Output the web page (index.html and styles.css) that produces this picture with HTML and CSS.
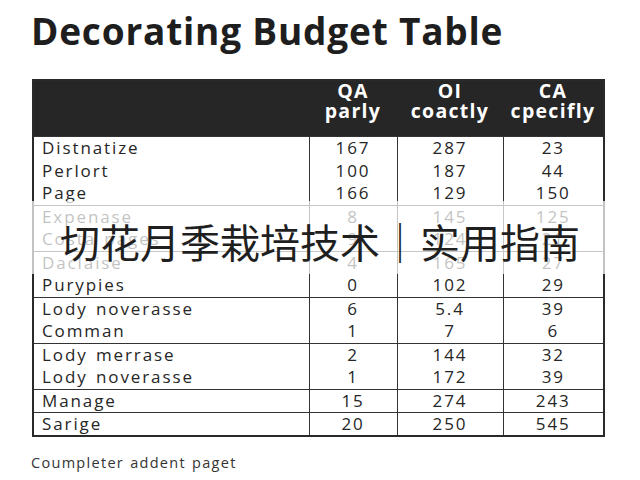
FILE: index.html
```html
<!DOCTYPE html>
<html lang="en">
<head>
<meta charset="utf-8">
<link rel="stylesheet" href="styles.css">
</head>
<body>
<div class="page">
  <h1 class="title">Decorating Budget Table</h1>
  <table class="budget">
    <colgroup>
      <col class="c-name"><col class="c-a"><col class="c-b"><col class="c-c">
    </colgroup>
    <thead>
      <tr>
        <th></th>
        <th>QA<br>parly</th>
        <th>OI<br>coactly</th>
        <th>CA<br>cpecifly</th>
      </tr>
    </thead>
    <tbody>
      <tr><td>Distnatize</td><td>167</td><td>287</td><td>23</td></tr>
      <tr><td>Perlort</td><td>100</td><td>187</td><td>44</td></tr>
      <tr><td>Page</td><td>166</td><td>129</td><td>150</td></tr>
    </tbody>
    <tbody>
      <tr><td>Expenase</td><td>8</td><td>145</td><td>125</td></tr>
      <tr><td>Costa pages</td><td>9</td><td>124</td><td>21</td></tr>
    </tbody>
    <tbody>
      <tr><td>Daclaise</td><td>4</td><td>165</td><td>27</td></tr>
      <tr><td>Purypies</td><td>0</td><td>102</td><td>29</td></tr>
    </tbody>
    <tbody>
      <tr><td>Lody noverasse</td><td>6</td><td>5.4</td><td>39</td></tr>
      <tr><td>Comman</td><td>1</td><td>7</td><td>6</td></tr>
    </tbody>
    <tbody>
      <tr><td>Lody merrase</td><td>2</td><td>144</td><td>32</td></tr>
      <tr><td>Lody noverasse</td><td>1</td><td>172</td><td>39</td></tr>
    </tbody>
    <tbody>
      <tr><td>Manage</td><td>15</td><td>274</td><td>243</td></tr>
    </tbody>
    <tbody>
      <tr><td>Sarige</td><td>20</td><td>250</td><td>545</td></tr>
    </tbody>
  </table>
  <p class="footnote">Coumpleter addent paget</p>
  <div class="banner">切花月季栽培技术｜实用指南</div>
</div>
</body>
</html>
```

FILE: styles.css
```css
* { box-sizing: border-box; }
html, body { margin: 0; padding: 0; background: #fff; }
body {
  width: 640px;
  height: 480px;
  overflow: hidden;
  font-family: "Open Sans", "Noto Sans", sans-serif;
  color: #222;
}
.page {
  position: relative;
  width: 640px;
  height: 480px;
  padding: 8px 0 0 31px;
}
.title {
  margin: 0;
  font-size: 37px;
  font-weight: 700;
  line-height: 46px;
  color: #1e1e1e;
  letter-spacing: 0.8px;
}
.budget {
  margin-top: 25px;
  margin-left: 1px;
  width: 571px;
  border-collapse: collapse;
  border: 2px solid #2a2a2a;
  font-size: 17px;
  letter-spacing: 1.9px;
  word-spacing: 2px;
  table-layout: fixed;
}
.c-name { width: 276px; }
.c-a { width: 88px; }
.c-b { width: 106px; }
.c-c { width: 101px; }
.budget thead th {
  background: #262626;
  color: #fff;
  font-weight: 700;
  font-size: 19.5px;
  letter-spacing: 1.3px;
  line-height: 20px;
  height: 56px;
  padding: 0;
  text-align: center;
  vertical-align: top;
  border: 0;
}
.budget tbody { border-top: 1.5px solid #333; }
.budget td {
  height: 23px;
  padding: 0;
  line-height: 22px;
  text-align: center;
  border-left: 1.5px solid #333;
  color: #262626;
}
.budget td:first-child {
  text-align: left;
  padding-left: 8px;
  border-left: 0;
}
.footnote {
  margin: 16px 0 0;
  font-size: 14.5px;
  letter-spacing: 1.3px;
  word-spacing: 1px;
  color: #333;
}
.banner {
  position: absolute;
  left: 0;
  top: 201px;
  width: 640px;
  height: 73px;
  background: rgba(255, 255, 255, 0.72);
  display: flex;
  align-items: center;
  justify-content: center;
  font-family: "Noto Sans CJK SC", "Noto Sans", sans-serif;
  font-size: 40px;
  font-weight: 400;
  color: #1f1f1f;
  padding-top: 6px;
}
```
